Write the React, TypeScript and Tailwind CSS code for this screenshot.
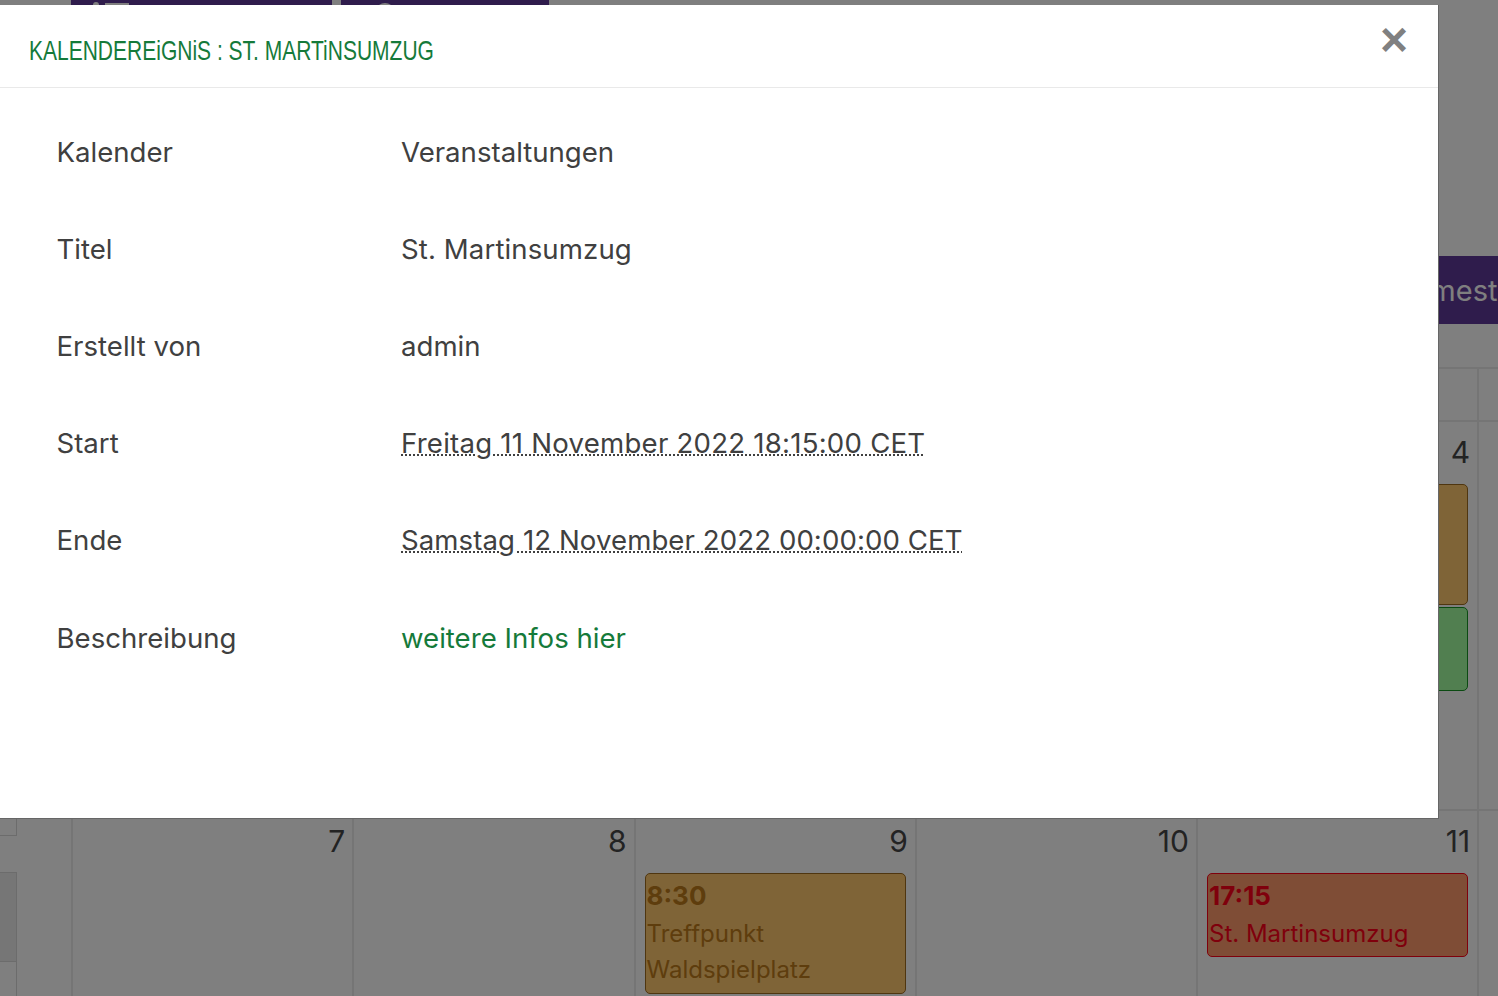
const sans = "font-['Inter',sans-serif]";
const gridCols = 'grid-cols-[71px_repeat(5,281.25px)_1fr]';

const details = [
  { label: 'Kalender', value: 'Veranstaltungen', valueClass: '' },
  { label: 'Titel', value: 'St. Martinsumzug', valueClass: 'tracking-[0.1px]' },
  { label: 'Erstellt von', value: 'admin', valueClass: '' },
  {
    label: 'Start',
    value: 'Freitag 11 November 2022 18:15:00 CET',
    valueClass: 'tracking-[0.23px] underline decoration-dotted decoration-2',
  },
  {
    label: 'Ende',
    value: 'Samstag 12 November 2022 00:00:00 CET',
    valueClass: 'tracking-[0.08px] underline decoration-dotted decoration-2',
  },
  { label: 'Beschreibung', value: 'weitere Infos hier', valueClass: 'text-[#157a3a]' },
];

function DayCell({ day, children }: { day?: number; children?: React.ReactNode }) {
  return (
    <div className="flex flex-col border-l-2 border-[#eaeaea] pr-[9px] pl-[9px]">
      <div className="-mr-[2px] h-[62px] pt-[12px] text-right text-[30px] leading-[36px] text-[#474747]">{day}</div>
      <div className="flex flex-col gap-[2px]">{children}</div>
    </div>
  );
}

function CalEvent({ className, time, title }: { className: string; time?: string; title?: string[] }) {
  return (
    <div className={`rounded-[5px] border px-px pt-[4px] text-[24px] leading-[36px] ${className}`}>
      {time && <div className="mb-[2px] text-[26px] leading-[36px] font-bold">{time}</div>}
      {title?.map((line) => <div key={line}>{line}</div>)}
    </div>
  );
}

export default function App() {
  return (
    <div className={`relative h-[996px] w-[1498px] overflow-hidden bg-white ${sans}`}>
      {/* Calendar behind the dialog */}
      <div className="flex h-[5px] gap-[9px] overflow-hidden pl-[71px]">
        <div className="relative h-[5px] w-[261px] bg-[#5e3899]">
          <span className="absolute top-[2px] left-[22px] h-[8px] w-[6px] rounded-full bg-white" />
          <span className="absolute top-[3px] left-[34px] h-[6px] w-[24px] bg-white" />
        </div>
        <div className="relative h-[5px] w-[208px] bg-[#5e3899]">
          <span className="absolute top-[3px] left-[34px] h-[20px] w-[20px] rounded-full bg-white" />
        </div>
      </div>
      <div className="mt-[251px] flex h-[68px] items-center justify-end overflow-hidden bg-[#5e3899]">
        <span className="-mr-[27px] text-[29px] leading-none whitespace-nowrap text-white">Semester</span>
      </div>

      <div className={`mt-[43px] grid h-[55px] border-y-2 border-[#eaeaea] ${gridCols}`}>
        <div className="col-span-6" />
        <div className="border-l-2 border-[#eaeaea]" />
      </div>

      <div className={`grid h-[389px] border-b-2 border-[#eaeaea] ${gridCols}`}>
        <div />
        <DayCell />
        <DayCell />
        <DayCell />
        <DayCell />
        <DayCell day={4}>
          <CalEvent className="h-[121px] border-[#9e6c20] bg-[#ffc86e]" />
          <CalEvent className="h-[84px] border-[#169424] bg-[#a3ffa0]" />
        </DayCell>
        <div className="border-l-2 border-[#eaeaea]" />
      </div>

      <div className={`grid h-[186px] ${gridCols}`}>
        <div className="flex flex-col">
          <div className="h-[25px] w-[17px] border-r border-b border-[#d8d8d8]" />
          <div className="mt-[36px] h-[90px] w-[17px] border-y border-r border-[#d8d8d8] bg-[#ececec]" />
          <div className="w-[17px] flex-1 border-r border-[#d8d8d8]" />
        </div>
        <DayCell day={7} />
        <DayCell day={8} />
        <DayCell day={9}>
          <CalEvent
            className="h-[121px] border-[#9e6c20] bg-[#ffc86e] text-[#bc7a1a]"
            time="8:30"
            title={['Treffpunkt', 'Waldspielplatz']}
          />
          <CalEvent className="h-[84px] border-[#169424] bg-[#a3ffa0]" />
        </DayCell>
        <DayCell day={10} />
        <DayCell day={11}>
          <CalEvent
            className="h-[84px] border-[#fe0018] bg-[#ff9a6c] text-[#fe0018]"
            time="17:15"
            title={['St. Martinsumzug']}
          />
        </DayCell>
        <div className="border-l-2 border-[#eaeaea]" />
      </div>

      {/* Backdrop */}
      <div className="absolute inset-0 bg-black/50" />

      {/* Dialog */}
      <div className="absolute top-[5px] left-0 h-[814px] w-[1439px] border-r border-b border-[#666666] bg-white">
        <div className="flex h-[83px] items-start justify-between border-b border-[#e9e9e9] pt-[30px] pl-[29px]">
          <h4 className="origin-left scale-x-75 font-['Liberation_Sans',sans-serif] text-[28px] leading-[32px] whitespace-nowrap text-[#157a3a]">
            KALENDEREiGNiS : ST. MARTiNSUMZUG
          </h4>
          <button className="mt-[-19px] mr-[30px] font-['Liberation_Sans',sans-serif] text-[48px] leading-[48px] font-bold text-[#808080]">
            ×
          </button>
        </div>
        <div className="flex flex-col pt-[40px] pl-[56.5px] text-[27.6px] leading-[48px] text-[#404040]">
          {details.map((row) => (
            <div key={row.label} className="flex h-[97px] last:pt-px">
              <div className="w-[344.5px]">{row.label}</div>
              <div>
                <span className={row.valueClass}>{row.value}</span>
              </div>
            </div>
          ))}
        </div>
      </div>
    </div>
  );
}
